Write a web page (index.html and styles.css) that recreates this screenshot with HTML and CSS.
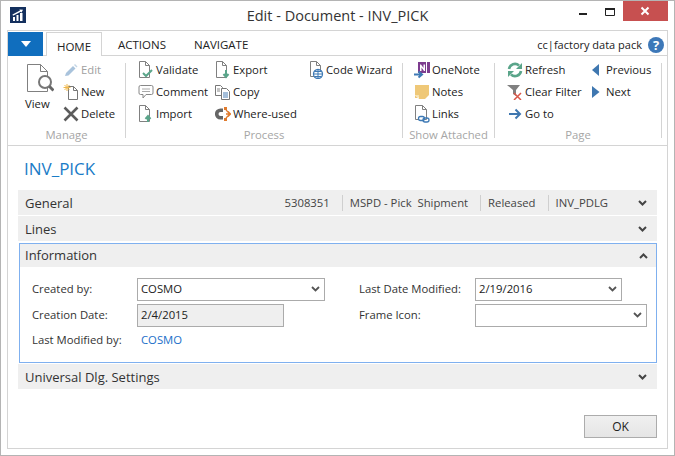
FILE: index.html
```html
<!DOCTYPE html>
<html lang="en">
<head>
    <meta charset="UTF-8">
    <title>Edit - Document - INV_PICK</title>
    <link rel="stylesheet" href="styles.css">
</head>
<body>
<div class="window">
    <div class="titlebar">
        <div class="title-left">
            <svg class="logo" width="16" height="16" viewBox="0 0 16 16"><rect width="16" height="16" fill="#14305e"/><path d="M3 10h2v4H3zM6.500 8h2v6h-2zM10 6h2.500v8H10z" fill="#fff"/><path d="M2.500 7.500 10 3.500l-.6-1 3.600.3-1.600 3-.6-1L3 8.700z" fill="#fff"/></svg>
        </div>
        <div class="title-text">Edit - Document - INV_PICK</div>
        <div class="win-controls">
            <div class="win-btn"><svg width="27" height="20" viewBox="0 0 27 20"><rect x="10" y="12" width="8" height="2" fill="#222"/></svg></div>
            <div class="win-btn"><svg width="27" height="20" viewBox="0 0 27 20"><path d="M9.500 8.500h9v6h-9z" fill="none" stroke="#222"/><rect x="9" y="7" width="10" height="2" fill="#222"/></svg></div>
            <div class="win-btn win-close"><svg width="45" height="20" viewBox="0 0 45 20"><path d="M18.500 6.500l7 7M25.500 6.500l-7 7" stroke="#fff" stroke-width="2"/></svg></div>
        </div>
    </div>

    <div class="frame">
        <div class="tabstrip">
            <div class="app-btn"><svg width="10" height="6" viewBox="0 0 10 6"><path d="M0 0h10L5 6z" fill="#fff"/></svg></div>
            <div class="tab tab-active">HOME</div>
            <div class="tab tab-actions">ACTIONS</div>
            <div class="tab tab-navigate">NAVIGATE</div>
            <div class="company">cc|factory data pack</div>
            <div class="help">?</div>
        </div>

        <div class="ribbon">
            <div class="group group-manage">
                <div class="group-body">
                    <div class="cmd-big">
                        <svg width="28" height="28" viewBox="0 0 28 28"><path d="M1.500.500h13l7 7v20h-20z" fill="#fff" stroke="#808080"/><path d="M14.500.500v7h7" fill="none" stroke="#808080"/><circle cx="19" cy="18" r="6" fill="#fff" stroke="#777" stroke-width="2"/><path d="M23.500 22.500l4 4" stroke="#666" stroke-width="3"/></svg>
                        <span class="cmd-big-label">View</span>
                    </div>
                    <div class="col">
                        <div class="cmd cmd-off"><svg width="16" height="16" viewBox="0 0 16 16"><path d="M3 11l7-7 2.500 2.500-7 7L2 14z" fill="#a9c3dc"/><path d="M11 3l1-1 2.500 2.500-1 1z" fill="#c3d5e6"/></svg><span>Edit</span></div>
                        <div class="cmd"><svg width="16" height="18" viewBox="0 0 16 18"><path d="M5.500 3.500h5l4 4v9h-9z" fill="#fff" stroke="#777"/><path d="M10.500 3.500v4h4" fill="none" stroke="#777"/><path d="M4 1v7M.5 4.500h7M1.500 2l5 5M6.500 2l-5 5" stroke="#f0b84c"/></svg><span>New</span></div>
                        <div class="cmd"><svg width="16" height="16" viewBox="0 0 16 16"><path d="M1.500 1.500l13 13M14.500 1.500l-13 13" stroke="#5c5c5c" stroke-width="2.600"/></svg><span>Delete</span></div>
                    </div>
                </div>
                <div class="group-label">Manage</div>
            </div>

            <div class="group group-process">
                <div class="group-body">
                    <div class="col col-validate">
                        <div class="cmd"><svg width="16" height="18" viewBox="0 0 16 18"><path d="M1.500.500h6l4 4v12h-10z" fill="#fff" stroke="#808080"/><path d="M7.500.500v4h4" fill="none" stroke="#808080"/><path d="M5 12l3 3 6-6" fill="none" stroke="#5aa58a" stroke-width="2"/></svg><span>Validate</span></div>
                        <div class="cmd"><svg width="16" height="16" viewBox="0 0 16 16"><path d="M2.500 1.500h11a1.500 1.500 0 0 1 1.500 1.500v6a1.500 1.500 0 0 1-1.500 1.500H8l-3 3.500v-3.500H2.500A1.500 1.500 0 0 1 1 9V3a1.500 1.500 0 0 1 1.500-1.500z" fill="#fff" stroke="#888"/><path d="M4 5h8M4 7.500h8" stroke="#aaa"/></svg><span>Comment</span></div>
                        <div class="cmd"><svg width="16" height="18" viewBox="0 0 16 18"><path d="M1.500.500h6l4 4v12h-10z" fill="#fff" stroke="#808080"/><path d="M7.500.500v4h4" fill="none" stroke="#808080"/><path d="M10 17v-5M7.500 14l2.500-3 2.500 3" fill="none" stroke="#5aa58a" stroke-width="2"/></svg><span>Import</span></div>
                    </div>
                    <div class="col col-export">
                        <div class="cmd"><svg width="16" height="18" viewBox="0 0 16 18"><path d="M1.500.500h6l4 4v12h-10z" fill="#fff" stroke="#808080"/><path d="M7.500.500v4h4" fill="none" stroke="#808080"/><path d="M11 9v6M8.500 13l2.500 3 2.500-3" fill="none" stroke="#5aa58a" stroke-width="2"/></svg><span>Export</span></div>
                        <div class="cmd"><svg width="16" height="16" viewBox="0 0 16 16"><path d="M.500 1.500h5l2 2v8h-7z" fill="#fff" stroke="#777"/><path d="M6.500 4.500h5l3 3v8h-8z" fill="#fff" stroke="#777"/><path d="M8 9h5M8 11h5M8 13h5" stroke="#4a7fb5"/><path d="M2 5h3M2 7h3" stroke="#888"/></svg><span>Copy</span></div>
                        <div class="cmd"><svg width="16" height="16" viewBox="0 0 16 16"><path d="M8 4.200H5.500a3.800 3.800 0 0 0 0 7.600H8" fill="none" stroke="#666" stroke-width="3.600"/><path d="M9 1h3v3H9zM9 12h3v3H9z" fill="#e07b2e"/><path d="M11 8h4M13 5.500L15.500 8 13 10.500M11 4l3 3M11 12l3-3" fill="none" stroke="#e07b2e" stroke-width="1.300"/></svg><span>Where-used</span></div>
                    </div>
                    <div class="col">
                        <div class="cmd"><svg width="16" height="18" viewBox="0 0 16 18"><path d="M2.500.500h6l4 4v11h-10z" fill="#fff" stroke="#808080"/><path d="M8.500.500v4h4" fill="none" stroke="#808080"/><circle cx="10" cy="13" r="4.500" fill="#fff" stroke="#3f7ab5" stroke-width="1.300"/><path d="M5.500 13h9M10 8.500v9M6.500 10.500h7M6.500 15.500h7" stroke="#3f7ab5"/></svg><span>Code Wizard</span></div>
                    </div>
                </div>
                <div class="group-label">Process</div>
            </div>

            <div class="group group-attached">
                <div class="group-body">
                    <div class="col">
                        <div class="cmd"><svg width="16" height="18" viewBox="0 0 16 18"><rect x="4" y="1" width="12" height="11" fill="#7d3c8f"/><rect x="12" y="1" width="1" height="11" fill="#fff"/><path d="M6 10V3.500h1L9.500 7V3.500H11V10h-1L7.500 6.500V10z" fill="#fff"/><path d="M0 13.500h7M4.500 10.500l3.500 3-3.500 3" fill="none" stroke="#3f7ab5" stroke-width="2"/></svg><span>OneNote</span></div>
                        <div class="cmd"><svg width="16" height="16" viewBox="0 0 16 16"><path d="M1 1h14v10l-4 4H5l-1-1H1z" fill="#efc878"/><path d="M1 11h4v4z" fill="#fff"/><path d="M1 11h4v3z" fill="#f7e2b0"/></svg><span>Notes</span></div>
                        <div class="cmd"><svg width="16" height="18" viewBox="0 0 16 18"><path d="M1.500.500h7l4 4v10h-11z" fill="#fff" stroke="#808080"/><path d="M8.500.500v4h4" fill="none" stroke="#808080"/><rect x="4.500" y="11.500" width="6" height="4" rx="2" fill="#fff" stroke="#3f7ab5" stroke-width="1.300"/><rect x="9" y="13" width="6" height="4" rx="2" fill="none" stroke="#3f7ab5" stroke-width="1.300"/></svg><span>Links</span></div>
                    </div>
                </div>
                <div class="group-label">Show Attached</div>
            </div>

            <div class="group group-page">
                <div class="group-body">
                    <div class="col col-refresh">
                        <div class="cmd"><svg width="16" height="16" viewBox="0 0 16 16"><path d="M2 7a6 6 0 0 1 10-3.500" fill="none" stroke="#5aa58a" stroke-width="2.600"/><path d="M9 7h6V1z" fill="#5aa58a"/><path d="M14 9a6 6 0 0 1-10 3.500" fill="none" stroke="#5aa58a" stroke-width="2.600"/><path d="M7 9H1v6z" fill="#5aa58a"/></svg><span>Refresh</span></div>
                        <div class="cmd"><svg width="16" height="16" viewBox="0 0 16 16"><path d="M0 1h13L9 6v6L6 10V6z" fill="#808080"/><path d="M7 9l7 7M14 9l-7 7" stroke="#d9584a" stroke-width="1.500"/></svg><span>Clear Filter</span></div>
                        <div class="cmd"><svg width="16" height="16" viewBox="0 0 16 16"><path d="M2 8h10" stroke="#3f77b0" stroke-width="2"/><path d="M8.500 3.500L13 8l-4.500 4.500" fill="none" stroke="#3f77b0" stroke-width="2"/></svg><span>Go to</span></div>
                    </div>
                    <div class="col">
                        <div class="cmd"><svg width="13" height="16" viewBox="0 0 13 16"><path d="M1 8l7-6v12z" fill="#3f77b0"/></svg><span>Previous</span></div>
                        <div class="cmd"><svg width="13" height="16" viewBox="0 0 13 16"><path d="M1 2l7.500 6L1 14z" fill="#3f77b0"/></svg><span>Next</span></div>
                    </div>
                </div>
                <div class="group-label">Page</div>
            </div>
        </div>

        <div class="content">
            <h1 class="page-title">INV_PICK</h1>

            <div class="fasttab">
                <span class="fasttab-title">General</span>
                <div class="summary">
                    <span class="summary-item">5308351</span>
                    <span class="summary-item">MSPD - Pick&nbsp; Shipment</span>
                    <span class="summary-item">Released</span>
                    <span class="summary-item">INV_PDLG</span>
                </div>
                <svg class="chevron" width="9" height="6" viewBox="0 0 9 6"><path d="M1 1l3.500 3.500L8 1" fill="none" stroke="#444" stroke-width="2"/></svg>
            </div>

            <div class="fasttab fasttab-lines">
                <span class="fasttab-title">Lines</span>
                <svg class="chevron" width="9" height="6" viewBox="0 0 9 6"><path d="M1 1l3.500 3.500L8 1" fill="none" stroke="#444" stroke-width="2"/></svg>
            </div>

            <div class="panel">
                <div class="panel-head">
                    <span class="fasttab-title">Information</span>
                    <svg class="chevron" width="9" height="6" viewBox="0 0 9 6"><path d="M1 5l3.500-3.500L8 5" fill="none" stroke="#444" stroke-width="2"/></svg>
                </div>
                <div class="panel-body">
                    <div class="form-col form-left">
                        <div class="field">
                            <label class="label">Created by:</label>
                            <div class="control control-wide">COSMO<svg width="9" height="6" viewBox="0 0 9 6"><path d="M1 1l3.500 3.500L8 1" fill="none" stroke="#555" stroke-width="1.800"/></svg></div>
                        </div>
                        <div class="field">
                            <label class="label">Creation Date:</label>
                            <div class="control control-med control-off">2/4/2015</div>
                        </div>
                        <div class="field field-text">
                            <label class="label">Last Modified by:</label>
                            <a class="link">COSMO</a>
                        </div>
                    </div>
                    <div class="form-col">
                        <div class="field">
                            <label class="label label-right">Last Date Modified:</label>
                            <div class="control control-med">2/19/2016<svg width="9" height="6" viewBox="0 0 9 6"><path d="M1 1l3.500 3.500L8 1" fill="none" stroke="#555" stroke-width="1.800"/></svg></div>
                        </div>
                        <div class="field">
                            <label class="label label-right">Frame Icon:</label>
                            <div class="control control-icon"><svg width="9" height="6" viewBox="0 0 9 6"><path d="M1 1l3.500 3.500L8 1" fill="none" stroke="#555" stroke-width="1.800"/></svg></div>
                        </div>
                    </div>
                </div>
            </div>

            <div class="fasttab fasttab-last">
                <span class="fasttab-title">Universal Dlg. Settings</span>
                <svg class="chevron" width="9" height="6" viewBox="0 0 9 6"><path d="M1 1l3.500 3.500L8 1" fill="none" stroke="#444" stroke-width="2"/></svg>
            </div>

            <div class="footer">
                <button class="ok-btn">OK</button>
            </div>
        </div>
    </div>
</div>
</body>
</html>
```

FILE: styles.css
```css
* {
    box-sizing: border-box;
}

body {
    margin: 0;
    background-color: #fff;
    color: #222;
    font-family: "Open Sans", "Noto Sans", sans-serif;
    font-size: 11.3px;
}

.window {
    width: 675px;
    height: 456px;
    border: 1px solid #b4b4b4;
    display: flex;
    flex-direction: column;
}

/* title bar */
.titlebar {
    height: 29px;
    display: grid;
    grid-template-columns: 1fr auto 1fr;
    flex: none;
}

.title-left {
    padding: 6px 0 0 9px;
}

.logo {
    display: block;
}

.title-text {
    font-size: 14.5px;
    line-height: 29px;
    color: #333;
}

.win-controls {
    display: flex;
    justify-content: flex-end;
    align-items: flex-start;
    padding-right: 6px;
}

.win-btn {
    height: 20px;
}

.win-btn svg {
    display: block;
}

.win-close {
    background-color: #c75050;
}

/* frame */
.frame {
    flex: 1;
    margin: 0 6px 6px 6px;
    border: 1px solid #d4d4d4;
    display: flex;
    flex-direction: column;
}

.tabstrip {
    height: 25px;
    flex: none;
    display: flex;
    align-items: flex-end;
    border-bottom: 1px solid #d4d4d4;
}

.app-btn {
    width: 35px;
    height: 24px;
    margin-bottom: -1px;
    background-color: #106ebe;
    display: flex;
    align-items: center;
    justify-content: center;
}

.tab {
    height: 24px;
    line-height: 27px;
    font-size: 11.5px;
    color: #222;
}

.tab-active {
    margin-left: 3px;
    margin-bottom: -1px;
    width: 56px;
    text-align: center;
    background-color: #fff;
    border: 1px solid #d4d4d4;
    border-bottom: none;
}

.tab-actions {
    margin-left: 16px;
}

.tab-navigate {
    margin-left: 28px;
}

.company {
    margin-left: auto;
    height: 24px;
    line-height: 27px;
    font-size: 11px;
    color: #222;
}

.help {
    width: 16px;
    height: 16px;
    margin: 0 3px 2px 6px;
    border-radius: 50%;
    background-color: #3d78b8;
    color: #fff;
    font-size: 13px;
    font-weight: bold;
    line-height: 16px;
    text-align: center;
}

/* ribbon */
.ribbon {
    height: 90px;
    flex: none;
    display: flex;
    align-items: flex-start;
    padding-top: 7px;
    border-bottom: 1px solid #d4d4d4;
}

.group {
    height: 75px;
    border-right: 1px solid #d4d4d4;
    display: flex;
    flex-direction: column;
    flex: none;
}

.group-manage {
    width: 118px;
    padding-left: 18px;
}

.group-process {
    width: 277px;
    padding-left: 12px;
}

.group-attached {
    width: 92px;
    padding-left: 11px;
}

.group-page {
    width: 167px;
    padding-left: 12px;
}

.group-body {
    height: 58px;
    display: flex;
    flex: none;
}

.group-label {
    height: 14px;
    line-height: 14px;
    margin-top: 7px;
    color: #a6a6a6;
    text-align: center;
    flex: none;
}

.group-manage .group-label {
    margin-left: -18px;
}

.group-process .group-label {
    margin-left: -12px;
}

.group-attached .group-label {
    margin-left: -11px;
}

.group-page .group-label {
    margin-left: -12px;
}

.col {
    display: flex;
    flex-direction: column;
    gap: 8px;
}

.col-validate {
    width: 77px;
}

.col-export {
    width: 93px;
}

.col-refresh {
    width: 84px;
}

.cmd {
    height: 14px;
    display: flex;
    align-items: center;
    gap: 2px;
    white-space: nowrap;
}

.cmd svg {
    flex: none;
}

.cmd span {
    padding-bottom: 2px;
}

.cmd-off {
    color: #a0a0a0;
}

.cmd-big {
    width: 37px;
    padding-top: 1px;
    display: flex;
    flex-direction: column;
    align-items: flex-start;
}

.cmd-big svg {
    display: block;
}

.cmd-big-label {
    line-height: 14px;
    margin: 5px 0 0 -1px;
}

/* content */
.content {
    flex: 1;
    padding: 0 10px;
    display: flex;
    flex-direction: column;
}

.page-title {
    margin: 0;
    padding: 12px 0 10px 6px;
    font-size: 17px;
    font-weight: normal;
    line-height: 22px;
    color: #1a7cc7;
}

.fasttab {
    height: 25px;
    flex: none;
    display: flex;
    align-items: center;
    padding: 0 10px 0 7px;
    background-color: #efefef;
}

.fasttab-lines {
    margin-top: 1px;
}

.fasttab-title {
    font-size: 13px;
    color: #333;
}

.chevron {
    margin-left: auto;
    flex: none;
}

.summary {
    margin-left: auto;
    display: flex;
    color: #444;
}

.summary-item {
    padding: 0 12px 0 7px;
    border-right: 1px solid #cfcfcf;
    line-height: 16px;
}

.summary-item:last-child {
    border-right: none;
}

.summary + .chevron {
    margin-left: 18px;
}

.panel {
    height: 120px;
    flex: none;
    margin: 2px 0 1px 1px;
    border: 1px solid #7fb0ef;
}

.panel-head {
    height: 23px;
    display: flex;
    align-items: center;
    padding: 0 8px 0 5px;
    background-color: #efefef;
}

.panel-head .fasttab-title {
    padding-bottom: 2px;
}

.panel-body {
    display: flex;
    padding: 11px 0 0 12px;
}

.form-col {
    display: flex;
    flex-direction: column;
    gap: 3px;
}

.form-left {
    width: 327px;
}

.field {
    height: 23px;
    display: flex;
    align-items: center;
}

.field-text {
    height: 16px;
    margin-top: 2px;
}

.label {
    width: 105px;
    flex: none;
    padding-bottom: 2px;
    color: #333;
}

.label-right {
    width: 116px;
}

.control {
    height: 23px;
    border: 1px solid #ababab;
    padding: 0 4px 2px 3px;
    display: flex;
    align-items: center;
    justify-content: space-between;
    background-color: #fff;
}

.control-wide {
    width: 188px;
}

.control-med {
    width: 147px;
}

.control-icon {
    width: 172px;
    justify-content: flex-end;
}

.control-off {
    background-color: #efefef;
}

.link {
    padding: 0 0 2px 4px;
    color: #1a6fc9;
}

.footer {
    margin-top: 26px;
    display: flex;
    justify-content: flex-end;
}

.ok-btn {
    width: 73px;
    height: 23px;
    padding: 0;
    border: 1px solid #acacac;
    background: linear-gradient(#f0f0f0, #e5e5e5);
    font-family: inherit;
    font-size: 12px;
    color: #222;
}
```
